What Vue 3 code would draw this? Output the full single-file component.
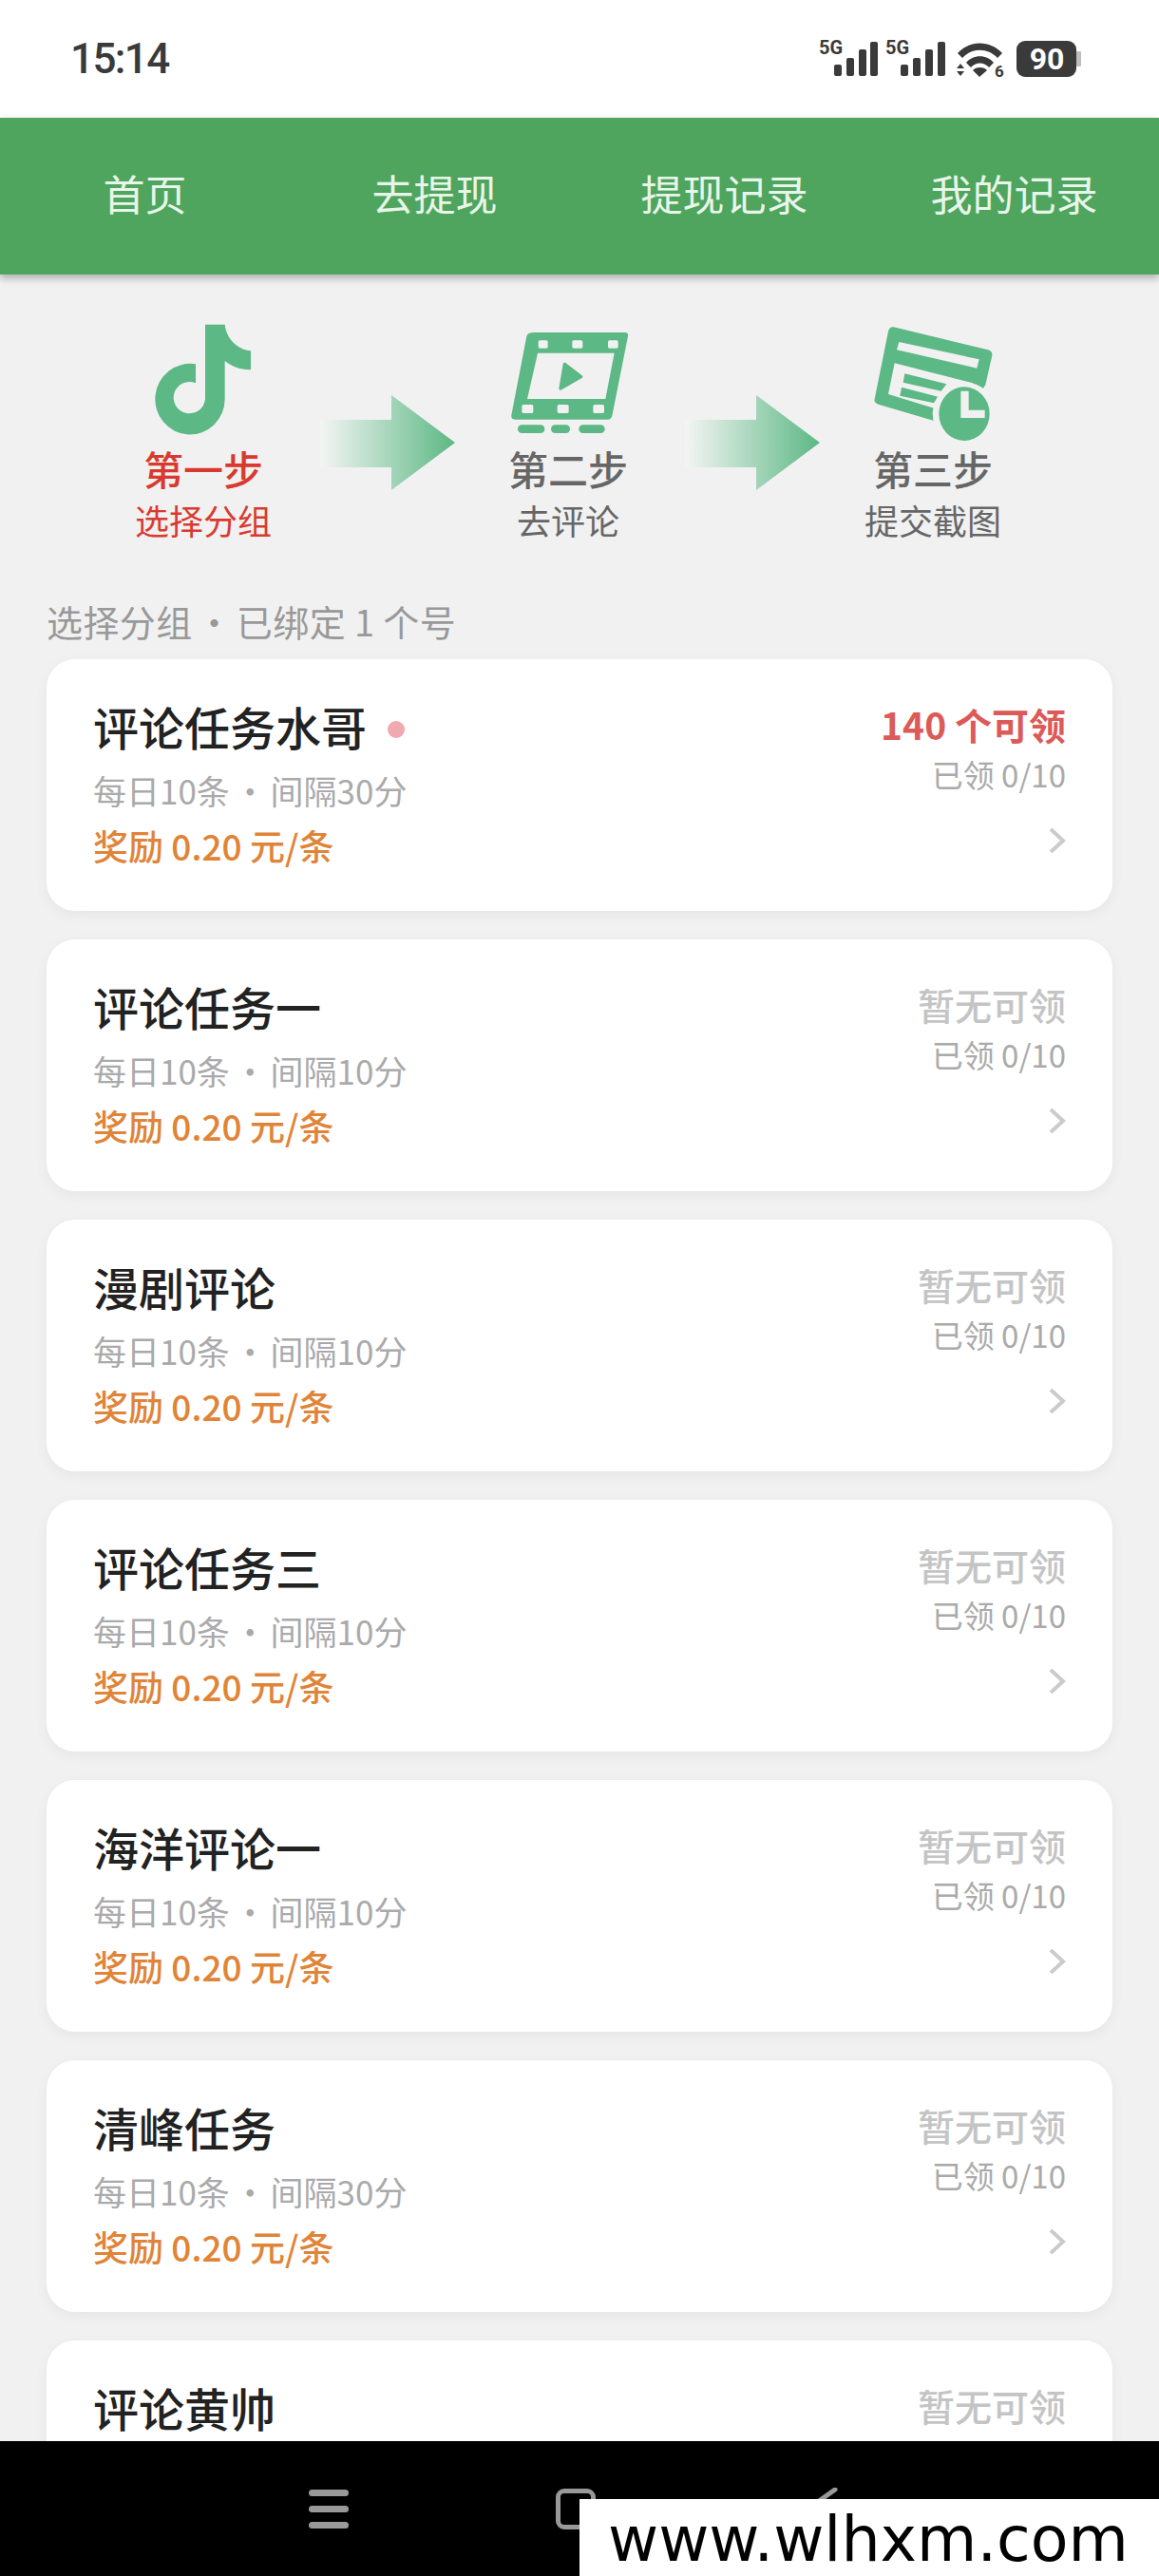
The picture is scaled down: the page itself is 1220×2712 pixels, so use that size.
<script setup>
const navItems = ['首页', '去提现', '提现记录', '我的记录']

const tasks = [
  { name: '评论任务水哥', limit: '每日10条 · 间隔30分', count: 140, dot: true },
  { name: '评论任务一', limit: '每日10条 · 间隔10分', count: 0 },
  { name: '漫剧评论', limit: '每日10条 · 间隔10分', count: 0 },
  { name: '评论任务三', limit: '每日10条 · 间隔10分', count: 0 },
  { name: '海洋评论一', limit: '每日10条 · 间隔10分', count: 0 },
  { name: '清峰任务', limit: '每日10条 · 间隔30分', count: 0 },
  { name: '评论黄帅', limit: '每日10条 · 间隔10分', count: 0 }
]
</script>

<template>
  <div class="page">
    <div class="status-bar">
      <span class="time">15:14</span>
      <svg class="status-icons" width="280" height="44" viewBox="0 0 280 44">
        <g fill="#3a3a3a">
          <text x="1" y="15" class="net">5G</text>
          <rect x="17" y="26" width="8" height="12" rx="2" />
          <rect x="30" y="19" width="8" height="19" rx="2" />
          <rect x="43" y="10" width="8" height="28" rx="2" />
          <rect x="55" y="2" width="8" height="36" rx="2" />
          <text x="71" y="15" class="net">5G</text>
          <rect x="87" y="26" width="8" height="12" rx="2" />
          <rect x="100" y="19" width="8" height="19" rx="2" />
          <rect x="113" y="10" width="8" height="28" rx="2" />
          <rect x="126" y="2" width="8" height="36" rx="2" />
          <path d="M147 14 C160 0 181 0 194 14 L189 19 C179 8 162 8 152 19 Z" />
          <path d="M156 24 C163 15 178 15 185 24 L180 29 C175 23 166 23 161 29 Z" />
          <path d="M163 32 C166 28 175 28 178 32 L170 39 Z" />
          <path d="M150 25 L154 30 H146 Z M150 38 L154 33 H146 Z" />
          <text x="186" y="39" class="six">6</text>
          <rect x="209" y="1" width="63" height="38" rx="9" />
        </g>
        <rect x="272" y="12" width="5" height="16" rx="1" fill="#bdbdbd" />
        <text x="241" y="31" text-anchor="middle" class="level">90</text>
      </svg>
    </div>

    <nav class="nav">
      <a v-for="item in navItems" :key="item" class="nav-item">{{ item }}</a>
    </nav>

    <main class="content">
      <div class="steps">
        <div class="step active">
          <svg class="step-icon" width="150" height="124" viewBox="117 60 450 372">
            <path fill="#5cb884" d="M348 65 H410 C415 110 450 145 492 148 V208 C460 208 432 198 410 180 V300 A110 112 0 1 1 318 190 V250 A50 50 0 1 0 348 300 Z" />
          </svg>
          <div class="step-title">第一步</div>
          <div class="step-sub">选择分组</div>
        </div>

        <svg class="arrow" width="146" height="100" viewBox="0 0 146 100">
          <defs>
            <linearGradient id="arrow-fade" x1="0" x2="1" y1="0" y2="0">
              <stop offset="0" stop-color="#f4f5f4" />
              <stop offset="1" stop-color="#5cb884" />
            </linearGradient>
          </defs>
          <path fill="url(#arrow-fade)" d="M4 26 H79 V0 L146 50 L79 100 V76 H4 Z" />
        </svg>

        <div class="step">
          <svg class="step-icon" width="150" height="124" viewBox="-21 0 450 372">
            <path fill="#5cb884" fill-rule="evenodd" d="M97 30 H383 Q395 30 393 42 L343 293 Q340 305 328 305 H37 Q23 305 25 291 L73 42 Q76 30 97 30 Z M108 95 L75 240 H322 L350 95 Z" />
            <g fill="#f1f1f1">
              <rect x="110" y="55" width="30" height="25" rx="5" />
              <rect x="217" y="55" width="33" height="25" rx="5" />
              <rect x="330" y="55" width="32" height="25" rx="5" />
              <rect x="58" y="258" width="36" height="27" rx="5" />
              <rect x="170" y="258" width="36" height="27" rx="5" />
              <rect x="283" y="258" width="35" height="27" rx="5" />
            </g>
            <path fill="#5cb884" stroke="#5cb884" stroke-width="10" stroke-linejoin="round" d="M193 130 L245 170 L180 207 Z" />
            <g fill="#5cb884">
              <rect x="45" y="322" width="85" height="26" rx="13" />
              <rect x="150" y="322" width="60" height="26" rx="13" />
              <rect x="238" y="322" width="82" height="26" rx="13" />
            </g>
          </svg>
          <div class="step-title">第二步</div>
          <div class="step-sub">去评论</div>
        </div>

        <svg class="arrow" width="146" height="100" viewBox="0 0 146 100">
          <path fill="url(#arrow-fade)" d="M4 26 H79 V0 L146 50 L79 100 V76 H4 Z" />
        </svg>

        <div class="step">
          <svg class="step-icon" width="150" height="124" viewBox="-6 15 450 372">
            <path fill="#5cb884" d="M95 28 L393 100 Q410 105 405 122 L385 210 L300 350 L215 322 L47 272 Q32 268 35 255 L78 42 Q82 26 95 28 Z" />
            <g fill="#f1f1f1">
              <path d="M112 75 L365 130 L358 158 L105 100 Z" />
              <path d="M98 142 L345 205 L300 300 L225 285 L78 240 Z" />
            </g>
            <path fill="#5cb884" d="M130 175 L262 208 L245 230 L125 203 Z M120 218 L235 248 L222 268 L115 245 Z" />
            <circle cx="318" cy="302" r="100" fill="#f1f1f1" />
            <ellipse cx="318" cy="302" rx="80" ry="85" fill="#5cb884" />
            <path fill="#f1f1f1" d="M307 230 H332 V290 H383 V315 H307 Z" />
          </svg>
          <div class="step-title">第三步</div>
          <div class="step-sub">提交截图</div>
        </div>
      </div>

      <div class="section-label">选择分组<span class="sep"> · </span>已绑定 1 个号</div>

      <div class="list">
        <div v-for="task in tasks" :key="task.name" class="card">
          <div class="card-left">
            <div class="card-name">
              {{ task.name }}<i v-if="task.dot" class="dot"></i>
            </div>
            <div class="card-limit">{{ task.limit }}</div>
            <div class="card-reward">奖励 0.20 元/条</div>
          </div>
          <div class="card-right">
            <div class="card-count" :class="{ empty: !task.count }">
              {{ task.count ? task.count + ' 个可领' : '暂无可领' }}
            </div>
            <div class="card-got">已领 0/10</div>
            <svg class="chevron" width="18" height="26" viewBox="0 0 18 26">
              <path d="M2 1 L15 13 L2 25" fill="none" stroke="#cbcbcb" stroke-width="4" />
            </svg>
          </div>
        </div>
      </div>
    </main>

    <div class="system-bar">
      <div class="menu-btn"><span></span><span></span><span></span></div>
      <div class="home-btn"></div>
      <svg class="back-btn" width="34" height="44" viewBox="0 0 34 44">
        <path d="M31 2 L3 22 L31 42" fill="none" stroke="#999" stroke-width="5" stroke-linecap="round" />
      </svg>
    </div>

    <div class="watermark">www.wlhxm.com</div>
  </div>
</template>

<style>
html,
body {
  margin: 0;
  padding: 0;
  background: #f1f1f1;
}
</style>

<style scoped>
.page {
  position: relative;
  display: flex;
  flex-direction: column;
  width: 1220px;
  height: 2712px;
  overflow: hidden;
  background: #f1f1f1;
  font-family: "Noto Sans CJK SC", "Noto Sans", sans-serif;
}

.status-bar {
  display: flex;
  align-items: center;
  justify-content: space-between;
  flex: none;
  height: 124px;
  padding: 0 79px 0 74px;
  box-sizing: border-box;
  background: #fff;
}

.time {
  font-family: Roboto, sans-serif;
  font-size: 44px;
  font-weight: 500;
  letter-spacing: -1.6px;
  color: #3a3a3a;
}

.status-icons {
  margin-top: 4px;
  overflow: visible;
}

.net {
  font-family: Roboto, sans-serif;
  font-size: 20px;
  font-weight: 700;
}

.six {
  font-family: Roboto, sans-serif;
  font-size: 17px;
  font-weight: 700;
}

.level {
  font-family: Roboto, sans-serif;
  font-size: 32px;
  font-weight: 700;
  fill: #fff;
}

.nav {
  position: relative;
  z-index: 1;
  display: flex;
  flex: none;
  height: 165px;
  background: #4fa55d;
  box-shadow: 0 4px 8px rgba(0, 0, 0, 0.28);
}

.nav-item {
  flex: 1;
  font-size: 44px;
  line-height: 159px;
  text-align: center;
  color: #e8f5ea;
}

.content {
  flex: 1;
  min-height: 0;
  overflow: hidden;
  padding: 0 49px;
}

.steps {
  display: flex;
  align-items: flex-start;
  margin: 0 -49px;
  padding: 51px 0 0 95px;
}

.step {
  display: flex;
  flex-direction: column;
  align-items: center;
  flex: none;
  width: 238px;
  color: #666;
}

.step-icon {
  display: block;
}

.step-title {
  margin-top: 1px;
  font-size: 42px;
  font-weight: 500;
  line-height: 56px;
}

.step-sub {
  font-size: 36px;
  line-height: 52px;
}

.step.active {
  color: #d93a30;
}

.arrow {
  flex: none;
  margin-top: 76px;
}

.section-label {
  margin-top: 56px;
  font-size: 38px;
  line-height: 50px;
  letter-spacing: 0.4px;
  color: #999;
}

.sep {
  word-spacing: -5px;
}

.list {
  display: flex;
  flex-direction: column;
  gap: 30px;
  margin-top: 15px;
}

.card {
  display: flex;
  justify-content: space-between;
  height: 265px;
  padding: 39px 49px 0;
  box-sizing: border-box;
  border-radius: 30px;
  background: #fff;
  box-shadow: 0 4px 14px rgba(0, 0, 0, 0.05);
}

.card-name {
  display: flex;
  align-items: center;
  font-size: 48px;
  font-weight: 500;
  line-height: 62px;
  color: #222;
}

.dot {
  width: 18px;
  height: 18px;
  margin: 8px 0 0 22px;
  border-radius: 50%;
  background: #f0a9ae;
}

.card-limit {
  margin-top: 11px;
  font-size: 35px;
  line-height: 52px;
  word-spacing: -4px;
  color: #aaa;
}

.card-reward {
  margin-top: 6px;
  font-size: 37px;
  font-weight: 500;
  line-height: 52px;
  color: #e08438;
}

.card-right {
  display: flex;
  flex-direction: column;
  align-items: flex-end;
  padding-top: 3px;
}

.card-count {
  font-size: 39px;
  font-weight: 700;
  line-height: 52px;
  color: #dc5a58;
}

.card-count.empty {
  font-weight: 500;
  color: #c4c4c4;
}

.card-got {
  margin-top: 3px;
  font-size: 33px;
  line-height: 48px;
  color: #aaa;
}

.chevron {
  margin-top: 33px;
}

.system-bar {
  display: flex;
  flex: none;
  align-items: center;
  gap: 218px;
  height: 142px;
  padding-left: 325px;
  box-sizing: border-box;
  background: #000;
}

.menu-btn {
  display: flex;
  flex-direction: column;
  gap: 10px;
  width: 42px;
}

.menu-btn span {
  height: 7px;
  border-radius: 4px;
  background: #999;
}

.home-btn {
  width: 32px;
  height: 33px;
  border: 5px solid #999;
  border-radius: 9px;
}

.back-btn {
  display: block;
  margin-left: 3px;
}

.watermark {
  position: absolute;
  right: 0;
  bottom: 0;
  width: 610px;
  height: 81px;
  box-sizing: border-box;
  padding-left: 30px;
  background: #fff;
  font-family: "DejaVu Sans", sans-serif;
  font-size: 65px;
  line-height: 85px;
  color: #000;
  white-space: nowrap;
  overflow: hidden;
}
</style>
